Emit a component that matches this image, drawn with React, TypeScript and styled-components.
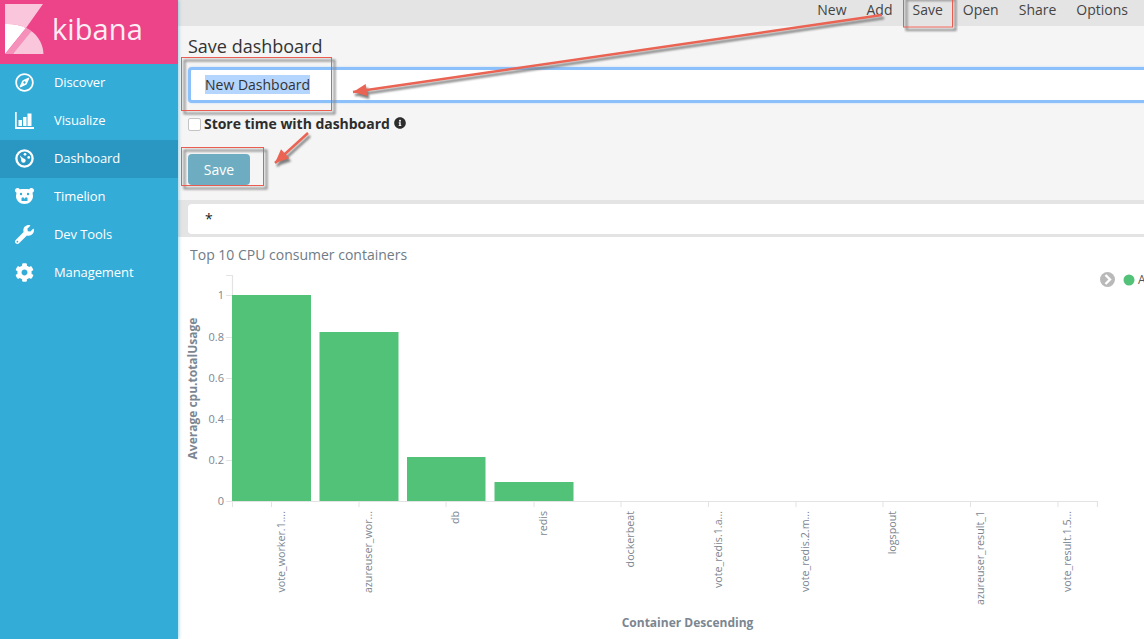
import React from 'react';
import styled, { createGlobalStyle } from 'styled-components';
import { FaCog, FaInfoCircle, FaRegCompass, FaWrench } from 'react-icons/fa';

const GlobalStyle = createGlobalStyle`
  html, body {
    margin: 0;
    height: 100%;
    overflow: hidden;
    background: #fff;
  }
  body {
    font-family: "Open Sans", "Liberation Sans", sans-serif;
  }
`;

const Page = styled.div`
  position: relative;
  display: flex;
  width: 1144px;
  height: 639px;
  overflow: hidden;
`;

const Sidebar = styled.nav`
  flex: 0 0 178px;
  display: flex;
  flex-direction: column;
  background: #33acd7;
  box-shadow: 1px 0 3px rgba(51, 172, 215, 0.45);
  z-index: 1;
`;

const LogoBar = styled.div`
  height: 64px;
  display: flex;
  align-items: flex-start;
  gap: 8px;
  padding: 4px 0 0 5px;
  box-sizing: border-box;
  background: #ec4389;
`;

const LogoText = styled.span`
  color: #fdeef5;
  font-family: "Open Sans", sans-serif;
  font-size: 29px;
  font-weight: 500;
  line-height: 50px;
  letter-spacing: 0.1px;
`;

const NavItem = styled.div<{ $active?: boolean }>`
  height: 38px;
  padding-bottom: 2px;
  display: flex;
  align-items: center;
  box-sizing: border-box;
  color: #fff;
  font-size: 13px;
  letter-spacing: -0.1px;
  background: ${({ $active }) => ($active ? '#2a97c2' : 'transparent')};
`;

const NavIcon = styled.span`
  width: 54px;
  display: flex;
  justify-content: center;
  padding-right: 5px;
  box-sizing: border-box;
  font-size: 19px;
  line-height: 0;
`;

const Main = styled.main`
  flex: 1;
  min-width: 0;
  display: flex;
  flex-direction: column;
`;

const TopBar = styled.div`
  height: 26px;
  display: flex;
  justify-content: flex-end;
  align-items: center;
  gap: 20px;
  padding: 0 16px 7px 0;
  box-sizing: border-box;
  background: #e4e4e4;
`;

const TopLink = styled.span`
  font-size: 14px;
  color: #444;
`;

const SavePanel = styled.section`
  height: 174px;
  padding: 8px 0 0 10px;
  box-sizing: border-box;
  background: #f5f5f5;
`;

const Title = styled.h1`
  margin: 0 0 9px;
  font-size: 18px;
  line-height: 24px;
  font-weight: 400;
  color: #333;
`;

const NameField = styled.div`
  height: 36px;
  margin-right: -20px;
  padding: 0 0 2px 14px;
  display: flex;
  align-items: center;
  box-sizing: border-box;
  background: #fff;
  border: 3px solid #8cc0fa;
  border-radius: 4px;
  box-shadow: 0 0 2px #b8d8fb;
`;

const Selected = styled.span`
  font-size: 14px;
  line-height: 19px;
  color: #333;
  background: #b4d5fe;
`;

const CheckRow = styled.label`
  display: flex;
  align-items: center;
  height: 20px;
  margin-top: 10px;
  font-size: 14px;
  font-weight: 700;
  letter-spacing: -0.03px;
  color: #2d2d2d;
`;

const CheckBox = styled.span`
  width: 11px;
  height: 11px;
  margin: 2px 3px 0 0;
  background: #fff;
  border: 1px solid #c4c4c4;
  border-radius: 2px;
`;

const InfoIcon = styled(FaInfoCircle)`
  margin-left: 4px;
  font-size: 12px;
  color: #2d2d2d;
`;

const SaveButton = styled.button`
  display: block;
  width: 62px;
  height: 31px;
  margin-top: 21px;
  padding: 0;
  border: 0;
  border-radius: 4px;
  background: #6eadc1;
  color: #fff;
  font-family: inherit;
  font-size: 14px;
`;

const QueryBand = styled.div`
  height: 37px;
  padding: 4px 0 3px 10px;
  box-sizing: border-box;
  background: #e4e4e4;
`;

const QueryField = styled.div`
  height: 30px;
  margin-right: -20px;
  padding: 0 0 2px 17px;
  display: flex;
  align-items: center;
  box-sizing: border-box;
  background: #fff;
  border-radius: 4px;
  font-size: 14px;
  color: #222;
`;

const ChartPanel = styled.section`
  flex: 1;
  min-height: 0;
  position: relative;
`;

const PanelTitle = styled.h2`
  margin: 0;
  padding: 8px 0 0 12px;
  font-size: 14px;
  line-height: 19px;
  font-weight: 400;
  color: #6f7b85;
`;

const ChartSvg = styled.svg`
  position: absolute;
  left: 0;
  top: 0;
  width: 966px;
  height: 402px;
  font-family: "Open Sans", sans-serif;
`;

const Overlay = styled.svg`
  position: absolute;
  inset: 0;
  width: 1144px;
  height: 639px;
  pointer-events: none;
  z-index: 2;
`;

const KibanaLogo = () => (
  <svg width="39" height="50" viewBox="0 0 39 50">
    <path d="M0 0h38L21 24C15 21 7 19.500 0 20z" fill="#f9c6dc" />
    <path d="M0 20c7-.5 15 1 21 4L0 50z" fill="#fff" />
    <path d="M21 24c10 4.500 17 14 17.500 26H8z" fill="#f9c6dc" />
    <path d="M21 24c2 .9 4 2 5.500 3.300L8 50H0z" fill="#f590bb" />
  </svg>
);

const ChartIcon = () => (
  <svg width="19" height="17" viewBox="0 0 19 17" fill="#fff">
    <path d="M0 0h1.700v15H19v2H0z" />
    <rect x="3.500" y="8" width="3.500" height="6" />
    <rect x="8" y="5" width="3.500" height="9" />
    <rect x="12.500" y="1.500" width="4" height="12.500" />
  </svg>
);

const GaugeIcon = () => (
  <svg width="19" height="19" viewBox="0 0 18 18">
    <circle cx="9" cy="9" r="7.700" fill="none" stroke="#fff" strokeWidth="2.200" />
    <circle cx="9.500" cy="5" r="1.300" fill="#fff" />
    <circle cx="13" cy="8" r="1.300" fill="#fff" />
    <circle cx="8" cy="11" r="2.100" fill="#fff" />
    <path d="M4.500 6l4.500 4-2 2.500z" fill="#fff" />
  </svg>
);

const BearIcon = () => (
  <svg width="19" height="16" viewBox="0 0 19 16">
    <path
      fill="#fff"
      d="M2.500 0C1 0 0 1 0 2.500c0 1 .6 1.800 1.500 2.200L1 8c0 4.500 3.800 8 8.500 8S18 12.500 18 8l-.500-3.300c.9-.4 1.500-1.200 1.500-2.200C19 1 18 0 16.500 0c-1 0-1.800.5-2.200 1.300C12.800 1 11 .9 9.500.9s-3.300.1-4.800.4C4.300.5 3.500 0 2.500 0z"
    />
    <circle cx="6" cy="6" r="1.200" fill="#33acd7" />
    <circle cx="13" cy="6" r="1.200" fill="#33acd7" />
    <path d="M6.500 10c1-1.500 5-1.500 6 0v3h-6z" fill="#33acd7" />
    <path d="M8 9h3l-1.500 1.800z" fill="#fff" />
  </svg>
);

const NAV_ITEMS = [
  { name: 'Discover', icon: <FaRegCompass /> },
  { name: 'Visualize', icon: <ChartIcon /> },
  { name: 'Dashboard', icon: <GaugeIcon />, active: true },
  { name: 'Timelion', icon: <BearIcon /> },
  { name: 'Dev Tools', icon: <FaWrench /> },
  { name: 'Management', icon: <FaCog /> },
];

const TOP_LINKS = ['New', 'Add', 'Save', 'Open', 'Share', 'Options'];

// chart coordinates are page coordinates minus the panel origin (178, 237)
const OX = 178;
const OY = 237;
const Y_TICKS = [
  { label: '1', y: 295 },
  { label: '0.8', y: 337 },
  { label: '0.6', y: 378 },
  { label: '0.4', y: 419 },
  { label: '0.2', y: 460 },
  { label: '0', y: 501 },
];
const BARS = [
  { x: 232, w: 79, top: 295 },
  { x: 319.500, w: 79, top: 332 },
  { x: 407, w: 78.500, top: 457 },
  { x: 494.500, w: 79, top: 482 },
];
const X_LABELS = [
  { label: 'vote_worker.1....', x: 271.500 },
  { label: 'azureuser_wor...', x: 359 },
  { label: 'db', x: 446 },
  { label: 'redis', x: 534 },
  { label: 'dockerbeat', x: 621 },
  { label: 'vote_redis.1.a...', x: 708.500 },
  { label: 'vote_redis.2.m...', x: 796 },
  { label: 'logspout', x: 883 },
  { label: 'azureuser_result_1', x: 970.500 },
  { label: 'vote_result.1.5...', x: 1058 },
];

const BarChart = () => (
  <ChartSvg viewBox="0 0 966 402">
    <g transform={`translate(${-OX} ${-OY})`}>
      <path d="M226 275.500h6.500V501.500M226 501.500H1097.500V507" fill="none" stroke="#e3e3e3" strokeWidth="1.200" />
      {Y_TICKS.map((t) => (
        <g key={t.label}>
          <line x1="226" x2="232" y1={t.y + 0.5} y2={t.y + 0.5} stroke="#e3e3e3" />
          <text x="224" y={t.y + 4} textAnchor="end" fontSize="11" fill="#7b8691">
            {t.label}
          </text>
        </g>
      ))}
      {BARS.map((b) => (
        <rect key={b.x} x={b.x} y={b.top} width={b.w} height={501 - b.top} fill="#52c278" />
      ))}
      {X_LABELS.map((l) => (
        <g key={l.label}>
          <line x1={l.x} x2={l.x} y1="501" y2="507" stroke="#e3e3e3" />
          <text
            transform={`translate(${l.x + 13} 511) rotate(-90)`}
            textAnchor="end"
            fontSize="10.700"
            fill="#7b8691"
          >
            {l.label}
          </text>
        </g>
      ))}
      <line x1="232.500" x2="232.500" y1="501" y2="507" stroke="#e3e3e3" />
      <text
        transform="translate(197 388.500) rotate(-90)"
        textAnchor="middle"
        fontSize="12"
        fontWeight="700"
        fill="#7b8691"
      >
        Average cpu.totalUsage
      </text>
      <text x="687.500" y="627" textAnchor="middle" fontSize="12" fontWeight="700" fill="#7b8691">
        Container Descending
      </text>
      <circle cx="1107.500" cy="279.500" r="7.500" fill="#b9b9b9" />
      <path d="M1105.500 275l4.500 4.500-4.500 4.500" fill="none" stroke="#fff" strokeWidth="2.400" />
      <circle cx="1129" cy="280" r="5.500" fill="#52c278" />
      <text x="1138" y="284" fontSize="12" fill="#555">
        A
      </text>
    </g>
  </ChartSvg>
);

const RED = '#ea6353';
const SHADOW = '#7f7f7f';

const Arrow = ({ x1, y1, x2, y2 }: { x1: number; y1: number; x2: number; y2: number }) => {
  const a = Math.atan2(y2 - y1, x2 - x1);
  const size = 15;
  const spread = 0.42;
  const head = `${x2},${y2} ${x2 - size * Math.cos(a - spread)},${y2 - size * Math.sin(a - spread)} ${
    x2 - size * Math.cos(a + spread)
  },${y2 - size * Math.sin(a + spread)}`;
  return (
    <g>
      <g transform="translate(2 3)" filter="url(#soft)">
        <line x1={x1} y1={y1} x2={x2} y2={y2} stroke={SHADOW} strokeWidth="2.500" />
        <polygon points={head} fill={SHADOW} />
      </g>
      <line x1={x1} y1={y1} x2={x2} y2={y2} stroke={RED} strokeWidth="2.500" />
      <polygon points={head} fill={RED} />
    </g>
  );
};

const Frame = ({ x, y, w, h }: { x: number; y: number; w: number; h: number }) => (
  <g fill="none">
    <rect x={x + 3} y={y + 3} width={w} height={h} stroke="#8a8a8a" strokeWidth="2" filter="url(#soft)" />
    <rect x={x} y={y} width={w} height={h} stroke="#ea5b50" strokeWidth="1" />
  </g>
);

const Annotations = () => (
  <Overlay viewBox="0 0 1144 639">
    <defs>
      <filter id="soft" x="-5%" y="-20%" width="110%" height="140%">
        <feGaussianBlur stdDeviation="0.800" />
      </filter>
    </defs>
    <Frame x={181.500} y={57.500} w={150} h={53} />
    <Frame x={181.500} y={147.500} w={82} h={38} />
    <Frame x={903.500} y={-3} w={49} h={30} />
    <Arrow x1={882} y1={15} x2={353} y2={92} />
    <Arrow x1={308} y1={133} x2={275} y2={163} />
  </Overlay>
);

const App = () => (
  <>
    <GlobalStyle />
    <Page>
      <Sidebar>
        <LogoBar>
          <KibanaLogo />
          <LogoText>kibana</LogoText>
        </LogoBar>
        {NAV_ITEMS.map((item) => (
          <NavItem key={item.name} $active={item.active}>
            <NavIcon>{item.icon}</NavIcon>
            {item.name}
          </NavItem>
        ))}
      </Sidebar>
      <Main>
        <TopBar>
          {TOP_LINKS.map((l) => (
            <TopLink key={l}>{l}</TopLink>
          ))}
        </TopBar>
        <SavePanel>
          <Title>Save dashboard</Title>
          <NameField>
            <Selected>New Dashboard</Selected>
          </NameField>
          <CheckRow>
            <CheckBox />
            Store time with dashboard
            <InfoIcon />
          </CheckRow>
          <SaveButton>Save</SaveButton>
        </SavePanel>
        <QueryBand>
          <QueryField>*</QueryField>
        </QueryBand>
        <ChartPanel>
          <PanelTitle>Top 10 CPU consumer containers</PanelTitle>
          <BarChart />
        </ChartPanel>
      </Main>
      <Annotations />
    </Page>
  </>
);

export default App;
